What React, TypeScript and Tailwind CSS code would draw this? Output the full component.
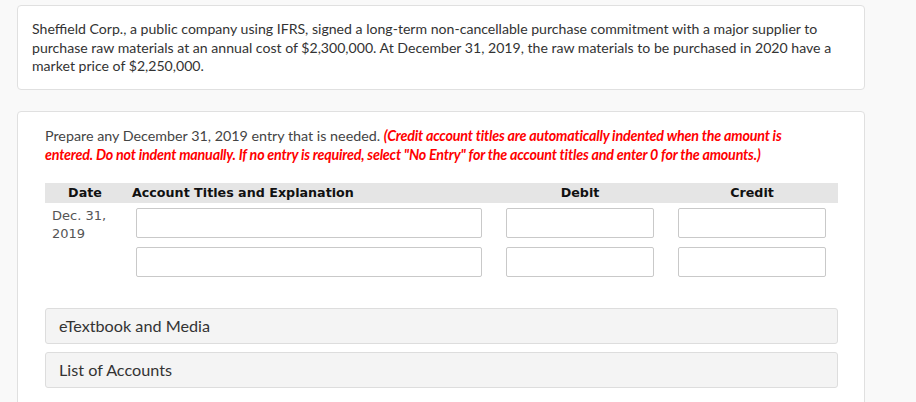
import React from "react";

const lato = { fontFamily: "Lato, 'Noto Sans', sans-serif" };

function Inp({ className }: { className: string }) {
  return (
    <div className={className}>
      <input
        type="text"
        className="block w-full h-[30px] border border-[#c9c9c9] rounded-[2px] bg-white outline-none"
      />
    </div>
  );
}

export default function App() {
  return (
    <div className="min-h-[402px] bg-[#f9f9f9] pt-[5px] pl-[17px] w-[916px] overflow-hidden">
      <div className="w-[848px] h-[85px] bg-white border border-[#e0e0e0] rounded-[4px] pl-[14px] pr-[14px] pt-[14px]">
        <p
          className="text-[14.1px] leading-[18.5px] text-[#333333]"
          style={lato}
        >
          Sheffield Corp., a public company using IFRS, signed a long-term non-cancellable purchase commitment with a major supplier to purchase raw materials at an annual cost of $2,300,000. At December 31, 2019, the raw materials to be purchased in 2020 have a market price of $2,250,000.
        </p>
      </div>

      <div className="mt-[21px] w-[848px] h-[320px] bg-white border border-[#e0e0e0] rounded-[4px] pl-[27px] pr-[26px] pt-[14px]">
        <p className="text-[14.3px] leading-[19px] text-[#444444] w-[760px]" style={lato}>
          Prepare any December 31, 2019 entry that is needed.{" "}
          <span className="italic font-bold text-[#ff0000] tracking-[-0.2px]">
            (Credit account titles are automatically indented when the amount is entered. Do not indent manually. If no entry is required, select "No Entry" for the account titles and enter 0 for the amounts.)
          </span>
        </p>

        <div
          className="mt-[19px] w-[793px]"
          style={{ fontFamily: "'DejaVu Sans', Verdana, sans-serif" }}
        >
          <div className="grid grid-cols-[83px_366px_172px_172px] h-[20px] bg-[#e5e5e5] items-center text-[12.7px] font-bold text-[#111111]">
            <div className="text-center pr-[3px]">Date</div>
            <div className="pl-[4px]">Account Titles and Explanation</div>
            <div className="text-center">Debit</div>
            <div className="text-center">Credit</div>
          </div>

          <div className="grid grid-cols-[83px_366px_172px_172px] mt-[5px] h-[30px]">
            <div className="h-[30px] pl-[7px] text-[13px] leading-[18px] text-[#555555] -mt-[1px] whitespace-nowrap">
              Dec. 31,
              <br />
              2019
            </div>
            <Inp className="pl-[8px] pr-[12px]" />
            <Inp className="px-[12px]" />
            <Inp className="px-[12px]" />
          </div>

          <div className="grid grid-cols-[83px_366px_172px_172px] mt-[9px]">
            <div />
            <Inp className="pl-[8px] pr-[12px]" />
            <Inp className="px-[12px]" />
            <Inp className="px-[12px]" />
          </div>
        </div>

        <div className="mt-[31px] w-[793px] flex flex-col gap-[8px]" style={lato}>
          <div className="h-[36px] bg-[#f4f4f4] border border-[#dddddd] rounded-[3px] pl-[13px] flex items-center text-[16.2px] text-[#333333]">
            eTextbook and Media
          </div>
          <div className="h-[36px] bg-[#f4f4f4] border border-[#dddddd] rounded-[3px] pl-[13px] flex items-center text-[16.2px] text-[#333333]">
            List of Accounts
          </div>
        </div>
      </div>
    </div>
  );
}
